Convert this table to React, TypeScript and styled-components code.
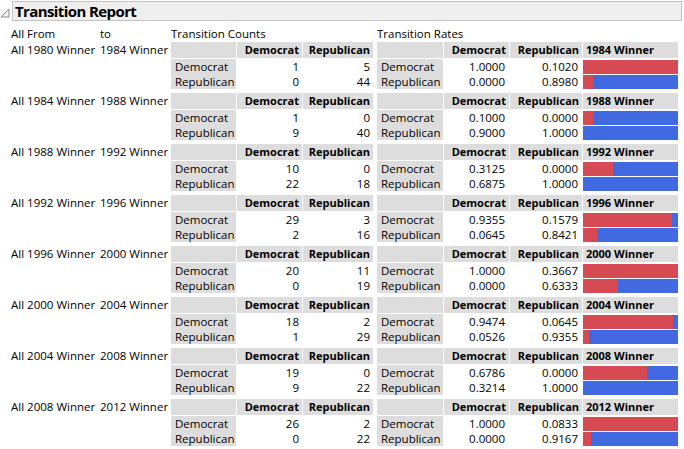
import React from 'react';
import styled, { createGlobalStyle } from 'styled-components';

type Transition = {
  from: string;
  to: string;
  counts: number[][];
  rates: number[][];
};

const PARTIES = ['Democrat', 'Republican'];

const transitions: Transition[] = [
  { from: '1980', to: '1984', counts: [[1, 5], [0, 44]], rates: [[1, 0.102], [0, 0.898]] },
  { from: '1984', to: '1988', counts: [[1, 0], [9, 40]], rates: [[0.1, 0], [0.9, 1]] },
  { from: '1988', to: '1992', counts: [[10, 0], [22, 18]], rates: [[0.3125, 0], [0.6875, 1]] },
  { from: '1992', to: '1996', counts: [[29, 3], [2, 16]], rates: [[0.9355, 0.1579], [0.0645, 0.8421]] },
  { from: '1996', to: '2000', counts: [[20, 11], [0, 19]], rates: [[1, 0.3667], [0, 0.6333]] },
  { from: '2000', to: '2004', counts: [[18, 2], [1, 29]], rates: [[0.9474, 0.0645], [0.0526, 0.9355]] },
  { from: '2004', to: '2008', counts: [[19, 0], [9, 22]], rates: [[0.6786, 0], [0.3214, 1]] },
  { from: '2008', to: '2012', counts: [[26, 2], [0, 22]], rates: [[1, 0.0833], [0, 0.9167]] },
];

const Disclosure = () => (
  <svg width="10" height="10" viewBox="0 0 10 10">
    <polygon points="1,9 9,1 9,9" fill="#f4f4f4" stroke="#8a8a8a" strokeWidth="1" />
  </svg>
);

const App = () => {
  return (
    <>
      <GlobalStyle />
      <S.Page>
        <S.TitleRow>
          <S.Toggle>
            <Disclosure />
          </S.Toggle>
          <S.TitleBar>Transition Report</S.TitleBar>
        </S.TitleRow>

        <S.LabelRow>
          <S.Label>All From</S.Label>
          <S.Label>to</S.Label>
          <S.Label>Transition Counts</S.Label>
          <S.Label>Transition Rates</S.Label>
        </S.LabelRow>

        {transitions.map((t) => (
          <S.GroupRow key={t.from}>
            <S.Label>All {t.from} Winner</S.Label>
            <S.Label>{t.to} Winner</S.Label>

            <S.CountTable>
              <S.HeadCell />
              {PARTIES.map((p) => (
                <S.HeadCell key={p} $align="right">
                  {p}
                </S.HeadCell>
              ))}
              <S.RowLabels>
                {PARTIES.map((p) => (
                  <span key={p}>{p}</span>
                ))}
              </S.RowLabels>
              {t.counts.map((row, i) =>
                row.map((v, j) => (
                  <S.NumCell key={`${i}-${j}`} style={{ gridRow: i + 2, gridColumn: j + 2 }}>
                    {v}
                  </S.NumCell>
                )),
              )}
            </S.CountTable>

            <S.RateTable>
              <S.HeadCell />
              {PARTIES.map((p) => (
                <S.HeadCell key={p} $align="right">
                  {p}
                </S.HeadCell>
              ))}
              <S.HeadCell $align="left">{t.to} Winner</S.HeadCell>
              <S.RowLabels>
                {PARTIES.map((p) => (
                  <span key={p}>{p}</span>
                ))}
              </S.RowLabels>
              {t.rates.map((row, i) =>
                row.map((v, j) => (
                  <S.NumCell key={`${i}-${j}`} $wide style={{ gridRow: i + 2, gridColumn: j + 2 }}>
                    {v.toFixed(4)}
                  </S.NumCell>
                )),
              )}
              {[0, 1].map((col) => (
                <S.BarCell key={col} style={{ gridRow: col + 2, gridColumn: 4 }}>
                  <S.RedPart style={{ width: `${t.rates[0][col] * 100}%` }} />
                </S.BarCell>
              ))}
            </S.RateTable>
          </S.GroupRow>
        ))}
      </S.Page>
    </>
  );
};

export default App;

const GlobalStyle = createGlobalStyle`
  body {
    margin: 0;
    background: #ffffff;
    font-family: "Open Sans", "Noto Sans", sans-serif;
    font-size: 11.5px;
    color: #000000;
  }
`;

const S = {
  Page: styled.div`
    width: 684px;
    height: 449px;
    overflow: hidden;
    padding-top: 1px;
    box-sizing: border-box;
  `,

  TitleRow: styled.div`
    display: flex;
    align-items: center;
    gap: 2px;
  `,

  Toggle: styled.div`
    display: flex;
    width: 10px;
    height: 10px;
    margin-top: 3px;
  `,

  TitleBar: styled.div`
    flex: 1;
    height: 18px;
    margin-right: 2px;
    padding-left: 2px;

    border: 1px solid #c4c4c4;
    background-color: #efefef;

    font-size: 15px;
    font-weight: 700;
    letter-spacing: -0.6px;
    line-height: 18px;
  `,

  LabelRow: styled.div`
    display: grid;
    grid-template-columns: 89px 71px 206px 301px;
    height: 21px;
    padding-left: 11px;
    align-items: end;
  `,

  GroupRow: styled.div`
    display: grid;
    grid-template-columns: 89px 71px 206px 301px;
    padding-left: 11px;
    margin-bottom: 4px;
    align-items: start;
  `,

  Label: styled.div`
    line-height: 16px;
    white-space: nowrap;
  `,

  CountTable: styled.div`
    display: grid;
    grid-template-columns: 65px 65px 70px;
    grid-template-rows: 17px 15px 15px;
    column-gap: 1px;
    line-height: 15px;
  `,

  RateTable: styled.div`
    display: grid;
    grid-template-columns: 66px 65px 72px 95px;
    grid-template-rows: 17px 15px 15px;
    column-gap: 1px;
    line-height: 15px;
  `,

  HeadCell: styled.div<{ $align?: 'left' | 'right' }>`
    height: 16px;
    padding: 0 3px;
    background-color: #dddddd;
    font-size: 11px;
    font-weight: 700;
    line-height: 16px;
    text-align: ${({ $align }) => $align || 'left'};
    white-space: nowrap;
  `,

  RowLabels: styled.div`
    grid-column: 1;
    grid-row: 2 / span 2;
    display: flex;
    flex-direction: column;
    padding-left: 4px;
    background-color: #dddddd;
  `,

  NumCell: styled.div<{ $wide?: boolean }>`
    padding-right: ${({ $wide }) => ($wide ? '4px' : '3px')};
    text-align: right;
  `,

  BarCell: styled.div`
    display: flex;
    height: 14px;
    margin-top: 1px;
    background-color: #4169e1;
  `,

  RedPart: styled.div`
    height: 100%;
    background-color: #d64b53;
  `,
};
